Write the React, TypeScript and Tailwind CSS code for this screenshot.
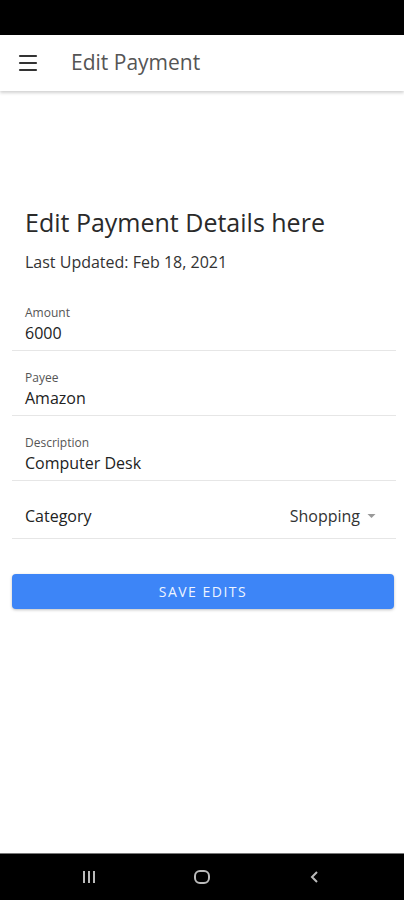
import { Menu } from 'lucide-react';

interface FieldProps {
  label: string;
  value: string;
}

const Field = ({ label, value }: FieldProps) => (
  <div className="ml-3 mr-2 border-b border-[#e6e6e6] px-[13px] pt-[20px] pb-[7px]">
    <div className="text-[12px] leading-[14px] text-[#555]">{label}</div>
    <div className="mt-[3px] text-[16px] leading-[20px] text-[#222]">{value}</div>
  </div>
);

const App = () => {
  return (
    <div
      className="flex h-[900px] w-[404px] flex-col overflow-hidden bg-white"
      style={{ fontFamily: '"Open Sans", "Liberation Sans", Arial, sans-serif' }}
    >
      <div className="h-[35px] shrink-0 bg-black" />
      <header className="flex h-[56px] shrink-0 items-center bg-white shadow-[0_2px_3px_rgba(0,0,0,0.18)]">
        <Menu className="ml-[16px] h-6 w-6 text-[#333]" strokeWidth={2.2} />
        <h1 className="ml-[31px] text-[21px] text-[#555]">Edit Payment</h1>
      </header>

      <main className="flex-1">
        <h2 className="mt-[115px] px-[25px] text-[25px] leading-[32px] text-[#2a2a2a]">
          Edit Payment Details here
        </h2>
        <p className="mt-[14px] px-[25px] text-[16px] leading-[20px] text-[#333]">
          Last Updated: Feb 18, 2021
        </p>

        <div className="mt-[14px]">
          <Field label="Amount" value="6000" />
          <Field label="Payee" value="Amazon" />
          <Field label="Description" value="Computer Desk" />
          <div className="ml-3 mr-2 flex h-[58px] items-center justify-between border-b border-[#e6e6e6] pt-[12px] pr-[20px] pl-[13px] text-[16px] text-[#222]">
            <span>Category</span>
            <span className="flex items-center text-[#333]">
              Shopping
              <svg viewBox="0 0 10 5" className="ml-[7px] h-[4px] w-[9px] fill-[#999]">
                <path d="M0 0 L10 0 L5 5 Z" />
              </svg>
            </span>
          </div>
        </div>

        <button className="mx-3 mt-[35px] flex h-[35px] w-[382px] items-center justify-center rounded-[4px] bg-[#3d85f7] text-[14px] tracking-[1.5px] text-[#eef4ff] shadow-[0_1px_3px_rgba(0,0,0,0.25)]">
          SAVE EDITS
        </button>
      </main>

      <nav className="flex h-[47px] shrink-0 items-center justify-center border-t border-[#777] bg-black">
        <div className="flex w-[246px] items-center justify-between">
          <svg viewBox="0 0 20 20" className="h-5 w-5" fill="none" stroke="#bbb" strokeWidth="2">
            <path d="M5 4v12M10 4v12M15 4v12" />
          </svg>
          <svg viewBox="0 0 20 20" className="h-5 w-5" fill="none" stroke="#bbb" strokeWidth="2">
            <rect x="3" y="4" width="14" height="12" rx="5" />
          </svg>
          <svg viewBox="0 0 20 20" className="h-5 w-5" fill="none" stroke="#bbb" strokeWidth="2">
            <path d="M12 5l-5 5 5 5" />
          </svg>
        </div>
      </nav>
    </div>
  );
};

export default App;
